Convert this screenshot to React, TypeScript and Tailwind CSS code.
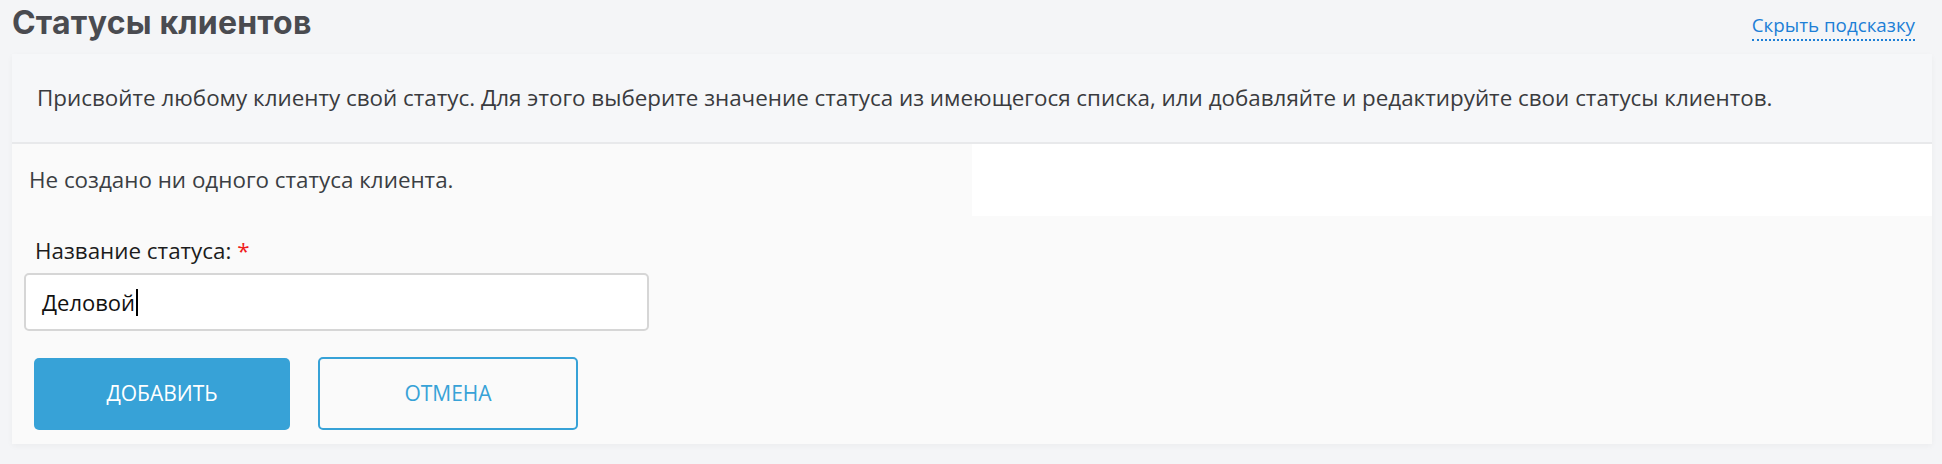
const body = { fontFamily: '"Open Sans", "Noto Sans", sans-serif' }

export default function App() {
  return (
    <div className="w-[1942px] h-[464px] overflow-hidden bg-[#f4f5f7]" style={body}>
      <div className="h-[54px] flex justify-between pl-[12px] pr-[27px]">
        <h1
          className="text-[32px] leading-[46px] font-bold text-[#4a4b50] tracking-[0.2px]"
          style={{ fontFamily: 'Inter, "Noto Sans", sans-serif' }}
        >
          Статусы клиентов
        </h1>
        <a
          href="#"
          className="mt-[13px] h-[28px] text-[18.8px] leading-[25px] text-[#1d7fd6] border-b-2 border-dotted border-[#1d7fd6]"
        >
          Скрыть подсказку
        </a>
      </div>

      <div className="ml-[12px] mr-[10px] bg-[#fafafa] shadow-[0_2px_6px_rgba(0,0,0,0.04)]">
        <div className="h-[90px] bg-[#f6f7f9] px-[25px] flex items-center border-b-2 border-[#e8e9eb]">
          <p className="text-[22.4px] leading-[30px] text-[#3a3b3e]">
            Присвойте любому клиенту свой статус. Для этого выберите значение статуса из имеющегося списка, или добавляйте и редактируйте свои статусы клиентов.
          </p>
        </div>

        <div className="flex h-[72px]">
          <div className="w-[960px] pl-[17px] flex items-center">
            <p className="text-[22.4px] leading-[30px] text-[#3b3e43]">Не создано ни одного статуса клиента.</p>
          </div>
          <div className="flex-1 bg-white" />
        </div>

        <div className="px-[12px] pt-[20px] pb-[14px]">
          <label className="block pl-[11px] text-[22.4px] leading-[30px] text-[#1c1c1c]">
            Название статуса: <span className="text-[#f01d1d]">*</span>
          </label>
          {/* поле ввода в фокусе, с видимым курсором */}
          <div
            role="textbox"
            className="mt-[7px] w-[625px] h-[58px] px-[16px] bg-white border-2 border-[#d6d6d6] rounded-[5px] flex items-center text-[22px] text-[#111]"
          >
            <span>Деловой</span>
            <span className="ml-[1px] w-[2px] h-[27px] bg-black" />
          </div>
          <div className="mt-[26px] flex items-center">
            <button className="ml-[10px] w-[256px] h-[72px] rounded-[5px] bg-[#37a2d7] text-white text-[21px] uppercase">
              Добавить
            </button>
            <button className="ml-[28px] w-[260px] h-[73px] rounded-[5px] border-2 border-[#37a2d7] text-[#37a2d7] text-[21px] uppercase">
              Отмена
            </button>
          </div>
        </div>
      </div>
    </div>
  )
}
